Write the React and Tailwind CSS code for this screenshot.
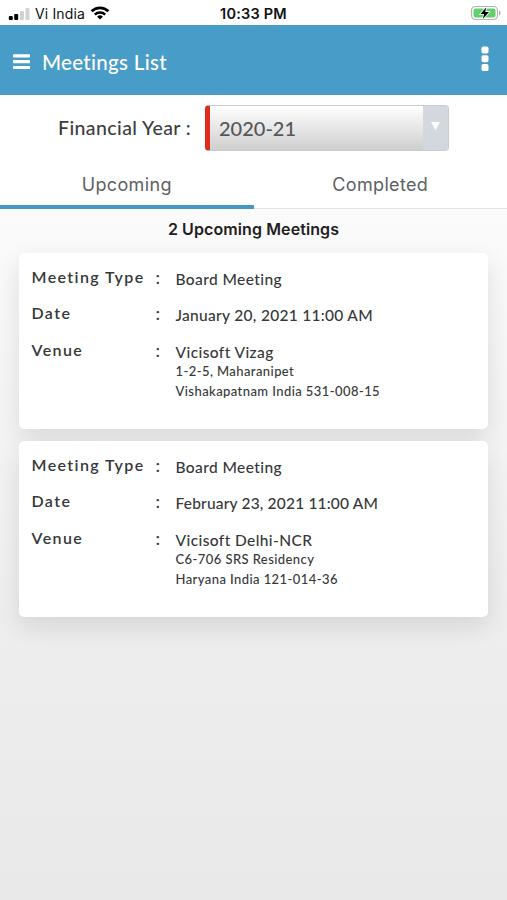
const meetings = [
    {
        id: 1,
        type: "Board Meeting",
        date: "January 20, 2021 11:00 AM",
        dateClass: "tracking-[0.3px]",
        venue: "Vicisoft Vizag",
        address: ["1-2-5, Maharanipet", "Vishakapatnam India 531-008-15"],
    },
    {
        id: 2,
        type: "Board Meeting",
        date: "February 23, 2021 11:00 AM",
        dateClass: "tracking-[0.18px]",
        venue: "Vicisoft Delhi-NCR",
        address: ["C6-706 SRS Residency", "Haryana India 121-014-36"],
    },
];

function StatusBar() {
    return (
        <div className="relative flex h-[25px] items-center justify-between bg-white pr-[5px] pl-2 pt-[3px] font-['Inter',sans-serif] text-[#111]">
            <div className="flex items-center">
                <svg width="22" height="13" viewBox="0 0 22 13">
                    <rect x="0.8" y="8" width="4" height="4" rx="1" fill="#000" />
                    <rect x="6.2" y="6" width="4" height="6" rx="1" fill="#000" />
                    <rect x="12" y="3" width="4" height="9" rx="1" fill="#d2d2d2" />
                    <rect x="17.5" y="0" width="4" height="12" rx="1" fill="#d2d2d2" />
                </svg>
                <span className="ml-[5px] w-[51px] whitespace-nowrap text-[14px] leading-[20px] tracking-[0.15px]">Vi India</span>
                <svg className="mb-[2px] ml-[4px]" width="20" height="14" viewBox="0 0 20 14" fill="none" stroke="#000">
                    <path d="M1.6 5.3a12 12 0 0 1 16.8 0" strokeWidth="2.7" />
                    <path d="M4.8 8.6a7.4 7.4 0 0 1 10.4 0" strokeWidth="2.4" />
                    <path d="M10 13.6 7.1 10.7a4.1 4.1 0 0 1 5.8 0Z" fill="#000" stroke="none" />
                </svg>
            </div>
            <span className="absolute inset-x-0 top-[4px] text-center text-[14.5px] leading-[20px] font-semibold tracking-[0.2px]">10:33 PM</span>
            <svg className="mb-[2px]" width="32" height="16" viewBox="0 0 32 16">
                <rect x="1.5" y="1.5" width="26" height="13" rx="4" fill="#fff" stroke="#b4b4b4" strokeWidth="1.2" />
                <rect x="3.5" y="3.5" width="22" height="9" rx="2" fill="#61cf6c" />
                <path d="M29 5.5c2 .8 2 4.2 0 5Z" fill="#a9a9a9" />
                <path d="M16.3 2.2 10.5 9h3.6l-1.3 5 6.2-7h-3.8Z" fill="#000" stroke="#fff" strokeWidth="1.6" paintOrder="stroke" />
            </svg>
        </div>
    );
}

function Header() {
    return (
        <header className="flex h-[70px] items-center bg-[#489cc8] pt-[3px] pr-[18px] pl-[13px] text-white">
            <svg width="17" height="16" viewBox="0 0 17 16" fill="#fff">
                <rect y="0.3" width="17" height="3.2" rx="0.8" />
                <rect y="6.1" width="17" height="3.2" rx="0.8" />
                <rect y="11.9" width="17" height="3.2" rx="0.8" />
            </svg>
            <h1 className="ml-[12px] pt-px text-[20.5px] font-medium tracking-[0.3px]">Meetings List</h1>
            <svg className="mb-[5px] ml-auto" width="8" height="26" viewBox="0 0 8 26" fill="#fff">
                <rect x="0.5" y="0.5" width="7" height="7" rx="1.7" />
                <rect x="0.5" y="9.3" width="7" height="7" rx="1.7" />
                <rect x="0.5" y="18.1" width="7" height="7" rx="1.7" />
            </svg>
        </header>
    );
}

function YearFilter() {
    return (
        <div className="flex h-[65px] items-center pl-[58px] text-[#3c3e40]">
            <label className="w-[147px] whitespace-nowrap text-[19.5px] font-medium tracking-[0.4px]">Financial Year :</label>
            <div className="flex h-[46px] w-[244px] overflow-hidden rounded-[4px] border border-l-[5px] border-[#c9ccce] border-l-[#e22b20]">
                <div className="flex grow items-center bg-linear-to-b from-white to-[#cfcfcf] pl-[9px] text-[20px] font-medium text-[#54575a]">
                    2020-21
                </div>
                <div className="flex w-[25px] justify-center bg-linear-to-b from-[#d5d8de] to-[#d2d7df] pt-[16px]">
                    <svg width="9" height="8" viewBox="0 0 9 8">
                        <path d="M0 0h9L4.5 8Z" fill="#fff" />
                    </svg>
                </div>
            </div>
        </div>
    );
}

function Tabs() {
    return (
        <div className="grid h-[49px] grid-cols-2 font-['Inter',sans-serif] text-[18px] tracking-[0.35px] text-[#5d6164]">
            <button className="border-b-4 border-[#4499c2] pt-[3px]">Upcoming</button>
            <button className="border-b border-[#dfe5e8]">Completed</button>
        </div>
    );
}

function Row({ label, children }) {
    return (
        <div className="flex min-h-[36.7px]">
            <div className="w-[124px] whitespace-nowrap text-[16px] leading-[20px] font-semibold tracking-[1.4px]">{label}</div>
            <div className="w-[20px] text-[18px] leading-[20px] font-medium">:</div>
            <div className="pt-[2px] text-[15.5px] leading-[20px] font-medium whitespace-nowrap">{children}</div>
        </div>
    );
}

function MeetingCard({ meeting }) {
    return (
        <div className="h-[176px] rounded-[5px] bg-white pt-[13.5px] pl-[12.5px] shadow-[0_10px_26px_rgba(0,0,0,0.11)]">
            <Row label="Meeting Type">
                <span className="tracking-[0.4px]">{meeting.type}</span>
            </Row>
            <Row label="Date">
                <span className={meeting.dateClass}>{meeting.date}</span>
            </Row>
            <Row label="Venue">
                <p className="mb-[-1px] tracking-[0.4px]">{meeting.venue}</p>
                {meeting.address.map((line) => (
                    <p key={line} className="text-[13px] leading-[20.5px] tracking-[0.42px]">{line}</p>
                ))}
            </Row>
        </div>
    );
}

export default function App() {
    return (
        <div className="flex h-[900px] w-[507px] flex-col overflow-hidden bg-white font-['Lato',sans-serif] text-[#363839]">
            <StatusBar />
            <Header />
            <YearFilter />
            <Tabs />
            <main className="grow bg-linear-to-b from-[#fbfbfb] via-[#eeeeee] via-60% to-[#e9e9e9] px-[19px] pt-[10px]">
                <h2 className="mb-[13px] text-center font-['Inter',sans-serif] text-[16px] leading-[21px] font-semibold tracking-[0.1px] text-[#1f2021]">
                    2 Upcoming Meetings
                </h2>
                <div className="flex flex-col gap-[12px]">
                    {meetings.map((meeting) => (
                        <MeetingCard key={meeting.id} meeting={meeting} />
                    ))}
                </div>
            </main>
        </div>
    );
}
